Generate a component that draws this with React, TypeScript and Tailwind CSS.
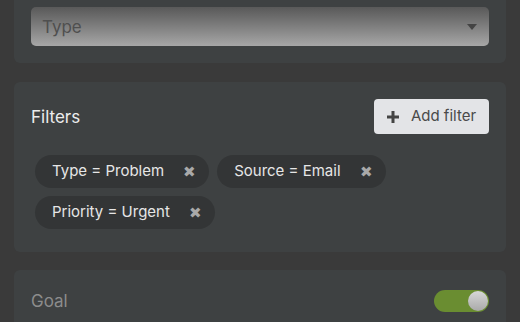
import React from 'react';

const chips = ['Type = Problem', 'Source = Email', 'Priority = Urgent'];

function FilterChip({ label }: { label: string }) {
  return (
    <div className="flex h-[33px] items-center rounded-full bg-[#333536] pl-[17px] pr-[13px] text-[15px] text-[#e6e6e6]">
      <span>{label}</span>
      <span className="ml-[19px] text-[15px] leading-none text-[#a9a9a9]">✖</span>
    </div>
  );
}

export default function App() {
  return (
    <div
      className="h-[322px] w-[520px] overflow-hidden bg-[#3a3a3a] px-[14px]"
      style={{ fontFamily: 'Inter, "Noto Sans", sans-serif' }}
    >
      <div className="rounded-b-[6px] bg-[#3e4142] px-[17px] pt-[7px] pb-[17px]">
        <div className="flex h-[39px] items-center justify-between rounded-[5px] bg-gradient-to-b from-[#595959] to-[#a7a7a7] pl-[11px] pr-[12px]">
          <span className="pt-[3px] text-[17px] text-[#4f4f4f]">Type</span>
          <svg width="10" height="6" viewBox="0 0 10 6">
            <path d="M0 0h10L5 6z" fill="#444" />
          </svg>
        </div>
      </div>

      <div className="mt-[19px] rounded-[6px] bg-[#3e4142] px-[17px] pt-[17px] pb-[23px]">
        <div className="flex items-center justify-between">
          <span className="pt-[3px] text-[17px] text-[#ececec]">Filters</span>
          <button className="flex h-[35px] w-[115px] items-center justify-center gap-[12px] rounded-[4px] bg-[#e3e4e7] text-[15px] text-[#4a4a4a]">
            <svg width="12" height="12" viewBox="0 0 12 12">
              <path d="M4.5 0h3v4.5H12v3H7.5V12h-3V7.5H0v-3h4.5z" fill="#444" />
            </svg>
            Add filter
          </button>
        </div>
        <div className="mt-[21px] flex flex-wrap gap-[8px] pl-[4px]">
          {chips.map((c) => (
            <FilterChip key={c} label={c} />
          ))}
        </div>
      </div>

      <div className="mt-[18px] rounded-[6px] bg-[#3e4142] px-[17px] pt-[17px] pb-[20px]">
        <div className="flex items-center justify-between">
          <span className="pt-[2px] text-[17px] text-[#8c8c8c]">Goal</span>
          <div className="flex h-[22px] w-[55px] items-center justify-end rounded-full bg-[#6a8d31] pr-[1px]">
            <div className="h-[20px] w-[20px] rounded-full bg-gradient-to-b from-[#d8d8d8] to-[#a9a9a9]" />
          </div>
        </div>
      </div>
    </div>
  );
}
